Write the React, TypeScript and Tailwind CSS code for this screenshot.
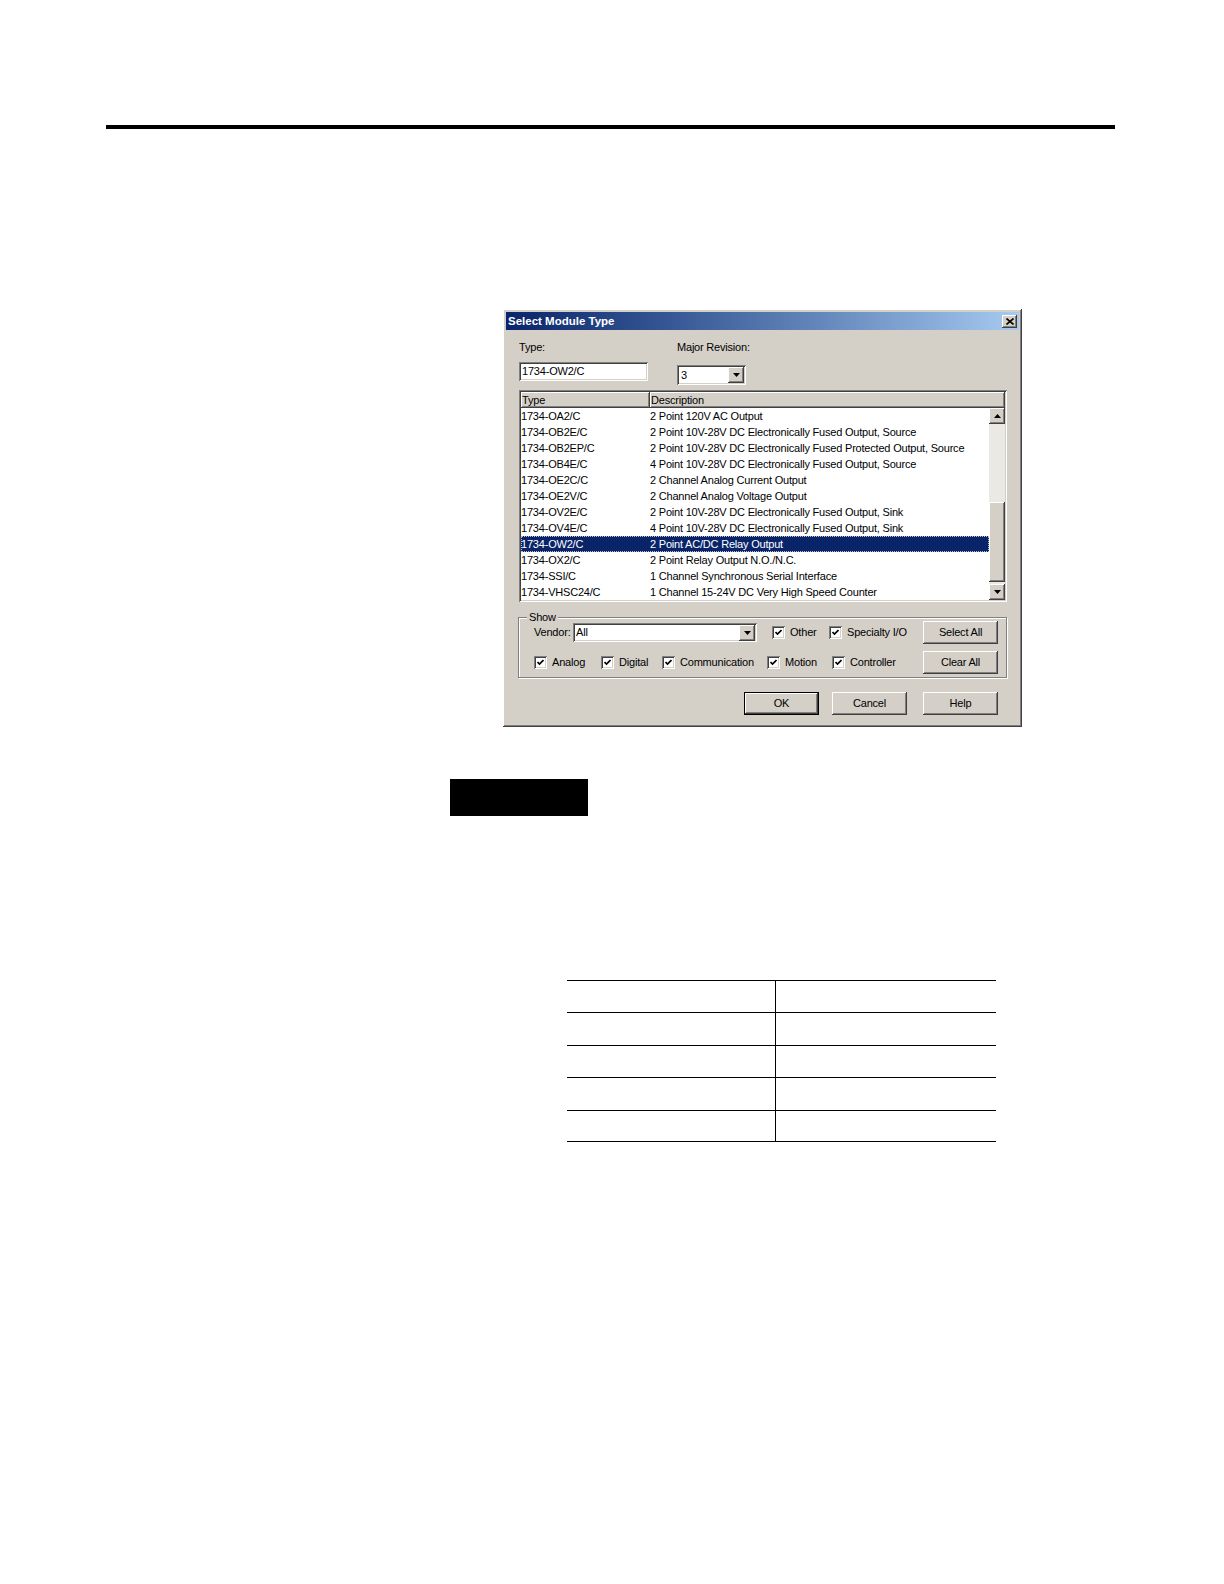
import React from 'react';

type ModuleRow = { type: string; desc: string };

const rows: ModuleRow[] = [
  { type: '1734-OA2/C', desc: '2 Point 120V AC Output' },
  { type: '1734-OB2E/C', desc: '2 Point 10V-28V DC Electronically Fused Output, Source' },
  { type: '1734-OB2EP/C', desc: '2 Point 10V-28V DC Electronically Fused Protected Output, Source' },
  { type: '1734-OB4E/C', desc: '4 Point 10V-28V DC Electronically Fused Output, Source' },
  { type: '1734-OE2C/C', desc: '2 Channel Analog Current Output' },
  { type: '1734-OE2V/C', desc: '2 Channel Analog Voltage Output' },
  { type: '1734-OV2E/C', desc: '2 Point 10V-28V DC Electronically Fused Output, Sink' },
  { type: '1734-OV4E/C', desc: '4 Point 10V-28V DC Electronically Fused Output, Sink' },
  { type: '1734-OW2/C', desc: '2 Point AC/DC Relay Output' },
  { type: '1734-OX2/C', desc: '2 Point Relay Output N.O./N.C.' },
  { type: '1734-SSI/C', desc: '1 Channel Synchronous Serial Interface' },
  { type: '1734-VHSC24/C', desc: '1 Channel 15-24V DC Very High Speed Counter' },
];

const SELECTED = '1734-OW2/C';

// classic 3D edges
const raised =
  'bg-[#d4d0c8] shadow-[inset_-1px_-1px_0_#404040,inset_1px_1px_0_#ffffff,inset_-2px_-2px_0_#808080,inset_2px_2px_0_#d4d0c8]';
const sunken =
  'bg-white shadow-[inset_1px_1px_0_#808080,inset_-1px_-1px_0_#ffffff,inset_2px_2px_0_#404040,inset_-2px_-2px_0_#d4d0c8]';

function Arrow({ dir }: { dir: 'up' | 'down' }) {
  return (
    <svg width="7" height="4" viewBox="0 0 7 4" className="block">
      {dir === 'down' ? <polygon points="0,0 7,0 3.5,4" fill="#000" /> : <polygon points="0,4 7,4 3.5,0" fill="#000" />}
    </svg>
  );
}

function DropButton() {
  return (
    <div className={`${raised} w-[16px] h-[16px] flex items-center justify-center shrink-0`}>
      <Arrow dir="down" />
    </div>
  );
}

function Check({ label, w }: { label: string; w?: string }) {
  return (
    <div className={`flex items-center shrink-0 ${w ?? ''}`}>
      <div className={`${sunken} w-[13px] h-[13px] flex items-center justify-center shrink-0`}>
        <svg width="7" height="7" viewBox="0 0 7 7" className="block">
          <polyline points="0.5,3 2.5,5 6.5,1" fill="none" stroke="#000" strokeWidth="1.7" />
        </svg>
      </div>
      <span className="ml-[5px] leading-[13px]">{label}</span>
    </div>
  );
}

function Btn({ label, isDefault }: { label: string; isDefault?: boolean }) {
  return (
    <div
      className={`${raised} w-[75px] h-[23px] flex items-center justify-center shrink-0 ${
        isDefault ? 'outline outline-1 outline-black -outline-offset-1 shadow-[inset_-2px_-2px_0_#404040,inset_2px_2px_0_#ffffff,inset_-3px_-3px_0_#808080]' : ''
      }`}
    >
      {label}
    </div>
  );
}

function Dialog() {
  return (
    <div className={`${raised} w-[519px] h-[418px] p-[3px] flex flex-col`}>
      <div className="h-[18px] bg-linear-to-r from-[#0a246a] to-[#a6caf0] flex items-center justify-between pl-[2px] pr-[2px]">
        <span className="text-white font-bold text-[11.5px] tracking-normal leading-[18px]">Select Module Type</span>
        <div className={`${raised} w-[15px] h-[13px] flex items-center justify-center`}>
          <svg width="8" height="7" viewBox="0 0 8 7" className="block">
            <path d="M0.5 0.5 L7.5 6.5 M7.5 0.5 L0.5 6.5" stroke="#000" strokeWidth="1.6" />
          </svg>
        </div>
      </div>

      <div className="flex-1 flex flex-col px-[12px]">
        {/* type / revision */}
        <div className="flex items-start ml-[1px] mt-[11px]">
          <div className="flex flex-col">
            <span className="leading-[13px]">Type:</span>
            <div className={`${sunken} mt-[8px] w-[129px] h-[19px] flex items-center pl-[3px]`}>1734-OW2/C</div>
          </div>
          <div className="flex flex-col ml-[29px]">
            <span className="leading-[13px]">Major Revision:</span>
            <div className={`${sunken} mt-[11px] w-[69px] h-[20px] flex items-center justify-between pl-[4px] pr-[2px]`}>
              <span>3</span>
              <DropButton />
            </div>
          </div>
        </div>

        {/* module list */}
        <div className={`${sunken} mt-[5px] ml-[1px] h-[212px] p-[2px] flex flex-col`}>
          <div className="flex h-[16px] shrink-0">
            <div className={`${raised} w-[129px] h-full pl-[1px] leading-[16px]`}>Type</div>
            <div className={`${raised} flex-1 h-full pl-[1px] leading-[16px]`}>Description</div>
          </div>
          <div className="flex flex-1">
            <div className="flex-1 flex flex-col">
              {rows.map((r) => {
                const sel = r.type === SELECTED;
                return (
                  <div
                    key={r.type}
                    className={`flex h-[16px] leading-[16px] whitespace-nowrap ${sel ? 'bg-[#0a246a] text-white outline outline-1 outline-dotted outline-[#c0c0c0] -outline-offset-1' : ''}`}
                  >
                    <span className="w-[129px] shrink-0">{r.type}</span>
                    <span>{r.desc}</span>
                  </div>
                );
              })}
            </div>
            <div className="w-[16px] flex flex-col">
              <div className={`${raised} h-[16px] flex items-center justify-center`}>
                <Arrow dir="up" />
              </div>
              <div className="h-[78px] bg-[#ebe9e5]" />
              <div className={`${raised} h-[80px]`} />
              <div className="h-[2px] bg-[#ebe9e5]" />
              <div className={`${raised} h-[16px] flex items-center justify-center`}>
                <Arrow dir="down" />
              </div>
            </div>
          </div>
        </div>

        {/* show group */}
        <div className="relative mt-[15px] h-[61px] border border-[#808080] shadow-[inset_1px_1px_0_#ffffff,1px_1px_0_#ffffff] flex flex-col pl-[15px] pr-[8px]">
          <span className="absolute -top-[7px] left-[8px] px-[2px] bg-[#d4d0c8] leading-[13px]">Show</span>
          <div className="flex items-center h-[23px] mt-[3px]">
            <span className="w-[39px] shrink-0">Vendor:</span>
            <div className={`${sunken} w-[184px] h-[19px] flex items-center justify-between pl-[3px] pr-[2px]`}>
              <span>All</span>
              <DropButton />
            </div>
            <div className="ml-[15px] flex">
              <Check label="Other" w="w-[57px]" />
              <Check label="Specialty I/O" />
            </div>
            <div className="ml-auto">
              <Btn label="Select All" />
            </div>
          </div>
          <div className="flex items-center h-[23px] mt-[7px]">
            <Check label="Analog" w="w-[67px]" />
            <Check label="Digital" w="w-[61px]" />
            <Check label="Communication" w="w-[105px]" />
            <Check label="Motion" w="w-[65px]" />
            <Check label="Controller" />
            <div className="ml-auto">
              <Btn label="Clear All" />
            </div>
          </div>
        </div>

        {/* dialog buttons */}
        <div className="flex justify-end gap-[13px] mt-[14px] pr-[9px]">
          <Btn label="OK" isDefault />
          <div className="flex gap-[16px]">
            <Btn label="Cancel" />
            <Btn label="Help" />
          </div>
        </div>
      </div>
    </div>
  );
}

export default function App() {
  return (
    <div className="w-[1224px] h-[1584px] bg-white flex flex-col font-['Liberation_Sans',Arial,sans-serif] text-[11px] tracking-[-0.2px] text-black overflow-hidden">
      <div className="mt-[125px] ml-[106px] w-[1009px] h-[4px] bg-black" />

      <div className="mt-[180px] ml-[503px]">
        <Dialog />
      </div>

      <div className="mt-[52px] ml-[450px] w-[138px] h-[37px] bg-black" />

      <div className="mt-[164px] ml-[567px] w-[429px] flex flex-col">
        {[0, 1, 2, 3, 4].map((i) => (
          <div key={i} className={`grid grid-cols-[209px_1fr] h-[32.4px] border-t border-black ${i === 4 ? 'border-b' : ''}`}>
            <div className="border-r border-black" />
            <div />
          </div>
        ))}
      </div>
    </div>
  );
}
